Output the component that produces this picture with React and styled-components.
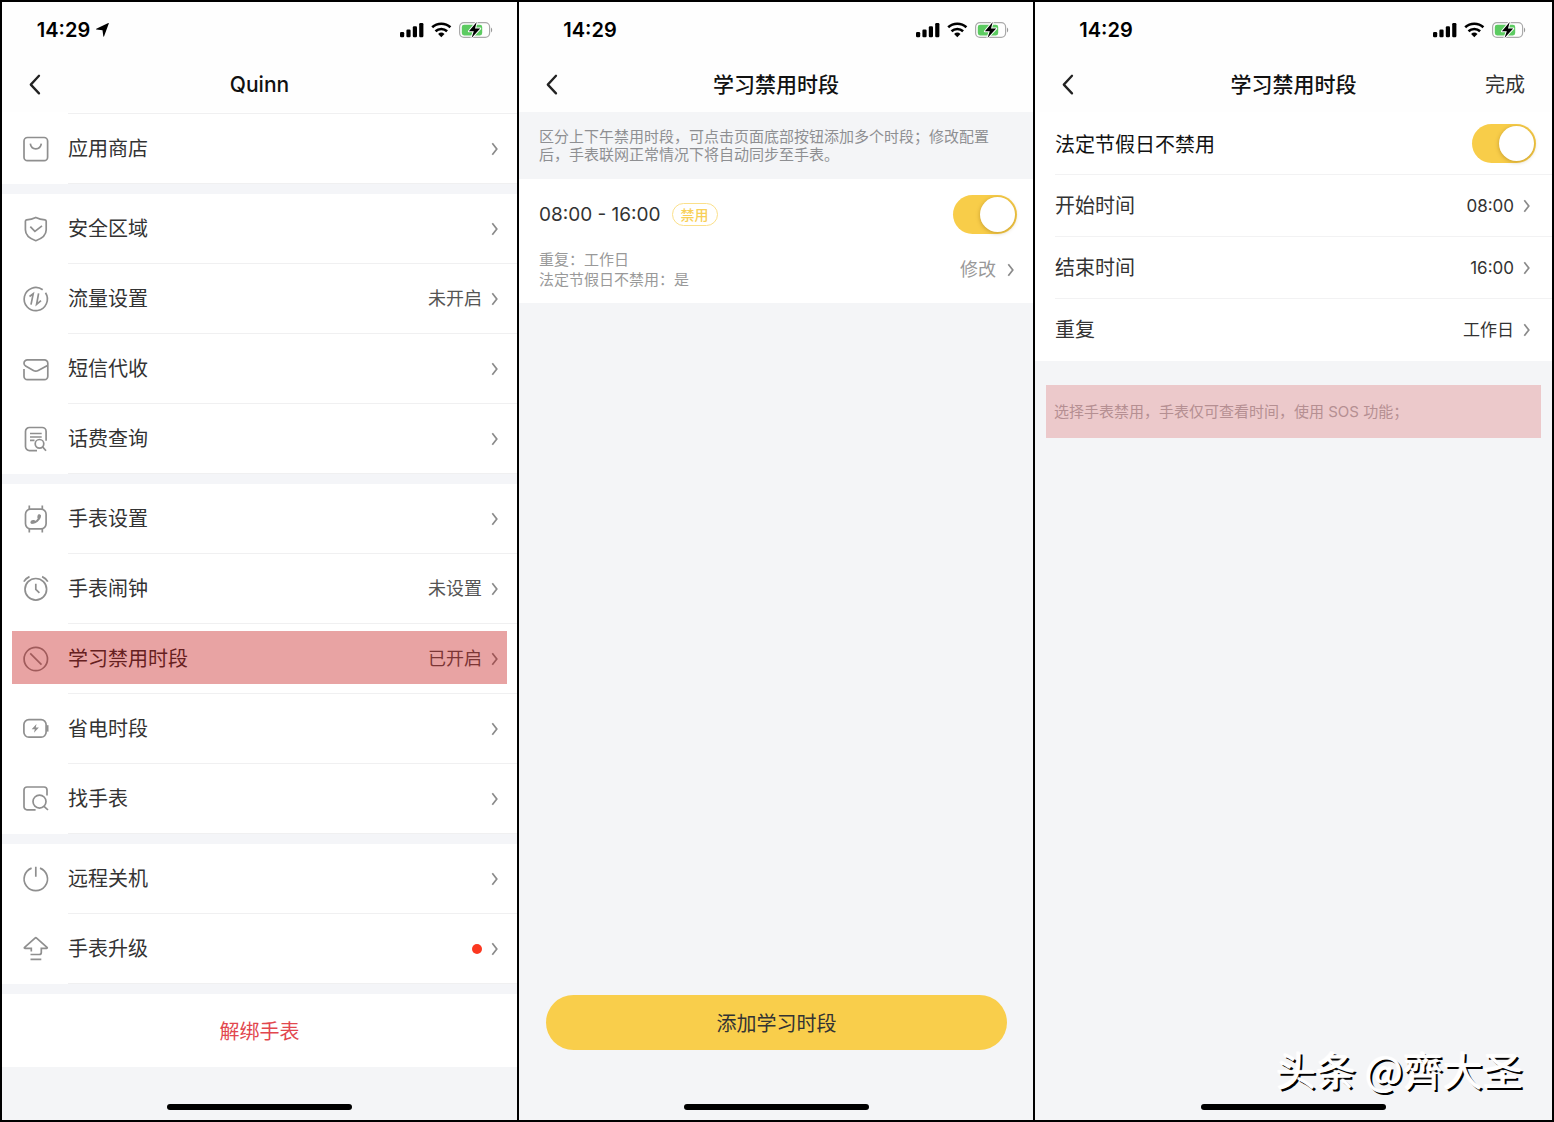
import React from "react";
import styled, { createGlobalStyle, css } from "styled-components";

const GlobalStyle = createGlobalStyle`
  *, *::before, *::after { box-sizing: border-box; }
  body {
    margin: 0;
    background: #000;
    color: #333;
    font-family: Inter, "Noto Sans CJK SC", sans-serif;
    font-size: 20px;
  }
  button { font: inherit; color: inherit; border: 0; background: none; padding: 0; cursor: pointer; }
  h1, p { margin: 0; font: inherit; }
  svg { display: block; flex: none; overflow: visible; }
`;

const Board = styled.main`
  display: grid;
  grid-template-columns: 515fr 514fr 517fr;
  gap: 2px;
  padding: 2px;
  min-height: 100vh;
  background: #000;
`;

const Screen = styled.section`
  position: relative;
  display: flex;
  flex-direction: column;
  min-width: 0;
  background: #f4f5f7;
`;

const Header = styled.header`
  background: #fefefe;
`;

const StatusBar = styled.div`
  display: flex;
  align-items: center;
  justify-content: space-between;
  max-width: 515px;
  height: 56px;
  padding-right: 25px;
  color: #000;
`;

const Clock = styled.div`
  display: flex;
  align-items: center;
  justify-content: center;
  gap: 6px;
  width: 142px;
  font-size: 20px;
  font-weight: 600;
  line-height: 24px;
`;

const NavBar = styled.div`
  display: grid;
  grid-template-columns: 1fr auto 1fr;
  align-items: center;
  height: 54px;
  padding: 0 27px;
`;

const BackButton = styled.button`
  justify-self: start;
`;

const Title = styled.h1`
  font-size: 21px;
  font-weight: 500;
  line-height: 28px;
  color: #111;
`;

const DoneButton = styled.button`
  justify-self: end;
  line-height: 28px;
`;

const List = styled.div`
  background: #fff;
`;

const TopLine = styled.div`
  height: ${(p) => (p.$visible ? 2 : 1)}px;
  margin-left: ${(p) => p.$indent}px;
  border-bottom: 1px solid ${(p) => (p.$visible ? "#f0f0f1" : "transparent")};
`;

const Gap = styled.div`
  height: 10px;
  background: #f4f5f8;
`;

const marked = css`
  &::after {
    content: "";
    position: absolute;
    inset: 7px 10px 10px;
    background: rgba(192, 0, 0, 0.36);
  }
`;

const MenuRow = styled.button`
  position: relative;
  display: flex;
  align-items: center;
  gap: 19px;
  width: 100%;
  height: 70px;
  padding-left: 21px;
  text-align: left;
  ${(p) => p.$marked && marked}
`;

const RowBody = styled.span`
  flex: 1;
  display: flex;
  align-items: center;
  justify-content: space-between;
  height: 70px;
  padding-right: 18px;
  box-shadow: inset 0 -1px #f0f0f1;
`;

const Label = styled.span`
  line-height: 28px;
`;

const Trailing = styled.span`
  display: flex;
  align-items: center;
  gap: ${(p) => p.$gap || 9}px;
  font-size: ${(p) => p.$size || 18}px;
  line-height: 24px;
  color: ${(p) => p.$color || "#555"};
`;

const Dot = styled.i`
  width: 10px;
  height: 10px;
  border-radius: 50%;
  background: #fb3820;
`;

const UnbindButton = styled.button`
  height: 73px;
  background: #fff;
  color: #e2474e;
`;

const HomeBar = styled.div`
  width: 185px;
  height: 6px;
  margin: auto auto 10px;
  border-radius: 3px;
  background: #000;
`;

const Intro = styled.p`
  padding: 16px 20px 15px;
  font-size: 15px;
  line-height: 18px;
  color: #8e8f92;
`;

const Card = styled.article`
  padding: 16px 16px 13px 20px;
  background: #fff;
`;

const CardRow = styled.div`
  display: flex;
  align-items: center;
  justify-content: space-between;
  & + & { margin-top: 16px; }
`;

const Period = styled.label`
  display: flex;
  align-items: center;
  gap: 11px;
  font-size: 19px;
  line-height: 24px;
`;

const Badge = styled.span`
  padding: 0 8px;
  border: 1px solid #fbe08a;
  border-radius: 12px;
  font-size: 14px;
  font-weight: 500;
  line-height: 21px;
  color: #f8d058;
`;

const Details = styled.p`
  font-size: 15px;
  line-height: 20px;
  color: #999;
`;

const EditButton = styled.button`
  padding-right: 2px;
`;

const Switch = styled.input`
  appearance: none;
  flex: none;
  display: flex;
  width: 64px;
  height: 39px;
  margin: 0;
  padding: 2px;
  border-radius: 20px;
  background: #ddd;
  cursor: pointer;

  &::before {
    content: "";
    width: 35px;
    height: 35px;
    border-radius: 50%;
    background: #fff;
    box-shadow: 0 1px 4px rgba(120, 80, 0, 0.4);
  }
  &:checked {
    justify-content: flex-end;
    background: #f8cd49;
  }
`;

const AddButton = styled.button`
  height: 55px;
  margin: auto 26px 0 27px;
  border-radius: 28px;
  background: #f9ce4b;
`;

const AddedHomeBar = styled(HomeBar)`
  margin-top: 54px;
`;

const fieldRow = css`
  display: flex;
  align-items: center;
  justify-content: space-between;
  height: 62px;
  margin-left: 20px;
  border-bottom: 1px solid ${(p) => (p.$last ? "transparent" : "#f2f2f3")};
`;

const SwitchRow = styled.div`
  ${fieldRow}
  padding-right: 16px;
  color: #111;
`;

const FieldRow = styled.button`
  ${fieldRow}
  width: calc(100% - 20px);
  padding-right: 21px;
`;

const Hint = styled.p`
  margin: 24px 11px 0;
  padding: 0 8px;
  font-size: 15px;
  line-height: 53px;
  background: #ecc9cb;
  color: #b58f92;
`;

const Watermark = styled.div`
  position: absolute;
  right: 29px;
  bottom: 24px;
  font-family: "Noto Sans CJK SC", sans-serif;
  font-size: 40px;
  line-height: 54px;
  color: #fff;
  text-shadow: -1px -1px 1px #fff, 2px 2px 0 #000;
`;

const Chevron = () => (
  <svg width="8" height="14" viewBox="0 0 8 14" fill="none" stroke="#8a8a8a" strokeWidth="1.7">
    <path d="M1.3 1.2 5.800 7l-4.500 5.800" />
  </svg>
);

const BackIcon = () => (
  <svg width="14" height="22" viewBox="0 0 14 22" fill="none" stroke="#222" strokeWidth="2.300" strokeLinecap="round" strokeLinejoin="round">
    <path d="M10 1.800 1.800 10.600 10 19.400" />
  </svg>
);

const LocationIcon = () => (
  <svg width="13" height="14" viewBox="0 0 13 14" fill="#000">
    <path d="M12.800.4 8 13.400q-.4.8-.7-.1L6.500 7.200.4 6.500q-.9-.2-.1-.7L12.300.1q.7-.3.500.3z" />
  </svg>
);

const StatusIcons = () => (
  <svg width="92" height="16" viewBox="0 0 92 16" fill="none">
    <g fill="#000">
      <rect x="0" y="10" width="4.200" height="5.200" rx="1.200" />
      <rect x="6.400" y="7.500" width="4.200" height="7.700" rx="1.200" />
      <rect x="12.800" y="4.200" width="4.200" height="11" rx="1.200" />
      <rect x="19.200" y="1" width="4.200" height="14.200" rx="1.200" />
    </g>
    <path d="M32.200 5.300a13.400 13.400 0 0 1 18.200 0M35.500 9.200a8.700 8.700 0 0 1 11.600 0" stroke="#000" strokeWidth="2.600" />
    <path d="M41.300 15.200l-3.200-3.300a4.700 4.700 0 0 1 6.400 0z" fill="#000" />
    <rect x="59.600" y=".6" width="30" height="14.800" rx="4.300" stroke="#aaa" strokeWidth="1.200" />
    <path d="M91 5.600q1.200.6 1.200 2.400T91 10.400z" fill="#999" />
    <rect x="61.800" y="2.700" width="20.400" height="10.700" rx="2.300" fill="#5ccb61" />
    <path d="M76.700 0 68.900 9.300h4.900L71.500 15.900 80.200 6.500h-5.200z" fill="#000" stroke="#fff" strokeWidth="2" paintOrder="stroke" strokeLinejoin="round" />
  </svg>
);

const icons = {
  store: (
    <>
      <rect x="1" y="1.500" width="23.600" height="23.200" rx="3.500" />
      <path d="M7.300 7.600c.5 3.400 2.600 5.200 5.500 5.200s5-1.800 5.500-5.200" />
    </>
  ),
  shield: (
    <>
      <path d="M12.800 1.500c3 1.400 5.800 2.100 9.200 2.400q1.200.2 1.200 1.300v8.600c0 5-3.200 8.500-10.400 10.900C5.600 22.300 2.400 18.800 2.400 13.800V5.200q0-1.100 1.200-1.300c3.400-.3 6.200-1 9.200-2.400z" />
      <path d="M7.300 10.700l4.600 4.700L19 9.900" />
    </>
  ),
  traffic: (
    <>
      <path d="M19.700 3.800A11.600 11.600 0 1 0 22.500 6.800" />
      <path d="M6.500 10.500 10.200 7.800 8 18.600M15.600 7.400 13.600 18.300 18 14.600" />
    </>
  ),
  mail: <path d="M1 13v7.200a3.400 3.400 0 0 0 3.400 3.400h17a3.400 3.400 0 0 0 3.400-3.400V7.300a3.400 3.400 0 0 0-3.400-3.400h-17A3.400 3.400 0 0 0 1 7.300c0 1.300.5 2.100 1.600 2.700l7.800 4.400a5 5 0 0 0 4.800 0L24.500 9.500" />,
  bill: (
    <>
      <path d="M14 24.600H6.500a4 4 0 0 1-4-4V5.500a4 4 0 0 1 4-4h12.600a4 4 0 0 1 4 4v9.300M7 7.500h11.700M7 11h11.700M7 14.300h4.500" />
      <circle cx="16.500" cy="17.800" r="4.300" />
      <path d="M19.600 20.900 23 24.700" />
    </>
  ),
  watch: (
    <>
      <rect x="2.500" y="3.200" width="20.600" height="19.600" rx="5" />
      <path d="M6.300-.5v4M19.300-.5v4M6.300 22.500v4M19.300 22.500v4" />
      <path d="M8.600 16.600C12.300 17.200 16.600 14 16.800 9.900" strokeWidth="2.200" strokeLinecap="round" />
      <path d="M9.200 15.900l1.500-.3M15.900 11.300l.3-1.500" strokeWidth="3.200" strokeLinecap="round" />
    </>
  ),
  alarm: (
    <>
      <circle cx="12.800" cy="13.300" r="10.800" />
      <path d="M12.800 7.800v5.600l3.600 3.400M.8 5.600C2.200 3.300 4 1.700 6.500.6M24.800 5.600C23.400 3.300 21.600 1.700 19.100.6" />
    </>
  ),
  ban: (
    <>
      <circle cx="12.800" cy="13" r="11.700" />
      <path d="M7.200 7.400 18.500 18.700" />
    </>
  ),
  power: (
    <>
      <rect x=".9" y="3.600" width="22.200" height="17.600" rx="5" />
      <path d="M24.500 9.200v6.400" strokeWidth="2" />
      <path d="M13.500 8 8.700 13.200h3.100l-.8 3.600 4.900-5.300h-3.100z" fill="#8f8f8f" stroke="none" />
    </>
  ),
  find: (
    <>
      <path d="M12.600 23.800H4a3 3 0 0 1-3-3V4a3 3 0 0 1 3-3h17a3 3 0 0 1 3 3v5.500" />
      <circle cx="16.500" cy="15.600" r="6.500" />
      <path d="M21 20.300 25 24" />
    </>
  ),
  shutdown: <path d="M8.600 2.100a11.700 11.700 0 1 0 8.400 0M12.800.8v9.900" />,
  upgrade: <path d="M8.300 15.600v-3.300H2q-1.200-.2-.4-1L12 2.100q.8-.7 1.600 0L24 11.300q.8.8-.4 1h-5.300v4.200q0 2-2 2H7.500M7.500 23.300h10.800" />,
};

const MenuIcon = ({ name }) => (
  <svg width="26" height="26" viewBox="0 0 26 26" fill="none" stroke="#8f8f8f" strokeWidth="1.700" aria-hidden="true">
    {icons[name]}
  </svg>
);

const menu = [
  [{ icon: "store", label: "应用商店" }],
  [
    { icon: "shield", label: "安全区域" },
    { icon: "traffic", label: "流量设置", value: "未开启" },
    { icon: "mail", label: "短信代收" },
    { icon: "bill", label: "话费查询" },
  ],
  [
    { icon: "watch", label: "手表设置" },
    { icon: "alarm", label: "手表闹钟", value: "未设置" },
    { icon: "ban", label: "学习禁用时段", value: "已开启", marked: true },
    { icon: "power", label: "省电时段" },
    { icon: "find", label: "找手表" },
  ],
  [
    { icon: "shutdown", label: "远程关机" },
    { icon: "upgrade", label: "手表升级", dot: true },
  ],
];

const fields = [
  { label: "开始时间", value: "08:00" },
  { label: "结束时间", value: "16:00" },
  { label: "重复", value: "工作日" },
];

function ScreenHeader({ title, located, action }) {
  return (
    <Header>
      <StatusBar>
        <Clock>
          14:29
          {located && <LocationIcon />}
        </Clock>
        <StatusIcons />
      </StatusBar>
      <NavBar>
        <BackButton type="button" aria-label="返回">
          <BackIcon />
        </BackButton>
        <Title>{title}</Title>
        {action && <DoneButton type="button">{action}</DoneButton>}
      </NavBar>
    </Header>
  );
}

function WatchMenu() {
  return (
    <Screen>
      <ScreenHeader title="Quinn" located />
      {menu.map((group, index) => (
        <React.Fragment key={group[0].label}>
          <List>
            {index === 0 && <TopLine $indent={66} $visible />}
            {group.map((item) => (
              <MenuRow type="button" key={item.label} $marked={item.marked}>
                <MenuIcon name={item.icon} />
                <RowBody>
                  <Label>{item.label}</Label>
                  <Trailing>
                    {item.value}
                    {item.dot && <Dot />}
                    <Chevron />
                  </Trailing>
                </RowBody>
              </MenuRow>
            ))}
          </List>
          <Gap />
        </React.Fragment>
      ))}
      <UnbindButton type="button">解绑手表</UnbindButton>
      <HomeBar />
    </Screen>
  );
}

function PeriodList() {
  return (
    <Screen>
      <ScreenHeader title="学习禁用时段" />
      <Intro>
        区分上下午禁用时段，可点击页面底部按钮添加多个时段；修改配置后，手表联网正常情况下将自动同步至手表。
      </Intro>
      <Card>
        <CardRow>
          <Period htmlFor="period-on">
            08:00 - 16:00
            <Badge>禁用</Badge>
          </Period>
          <Switch type="checkbox" id="period-on" defaultChecked />
        </CardRow>
        <CardRow>
          <Details>
            重复：工作日
            <br />
            法定节假日不禁用：是
          </Details>
          <EditButton type="button">
            <Trailing $color="#999" $gap={11}>
              修改
              <Chevron />
            </Trailing>
          </EditButton>
        </CardRow>
      </Card>
      <AddButton type="button">添加学习时段</AddButton>
      <AddedHomeBar />
    </Screen>
  );
}

function PeriodEditor() {
  return (
    <Screen>
      <ScreenHeader title="学习禁用时段" action="完成" />
      <List>
        <TopLine $indent={20} />
        <SwitchRow>
          <label htmlFor="holiday-off">法定节假日不禁用</label>
          <Switch type="checkbox" id="holiday-off" defaultChecked />
        </SwitchRow>
        {fields.map((field, index) => (
          <FieldRow type="button" key={field.label} $last={index === fields.length - 1}>
            <Label>{field.label}</Label>
            <Trailing $color="#333" $size={17}>
              {field.value}
              <Chevron />
            </Trailing>
          </FieldRow>
        ))}
      </List>
      <Hint>选择手表禁用，手表仅可查看时间，使用 SOS 功能；</Hint>
      <HomeBar />
      <Watermark>头条 @齊大圣</Watermark>
    </Screen>
  );
}

export default function App() {
  return (
    <>
      <GlobalStyle />
      <Board>
        <WatchMenu />
        <PeriodList />
        <PeriodEditor />
      </Board>
    </>
  );
}
